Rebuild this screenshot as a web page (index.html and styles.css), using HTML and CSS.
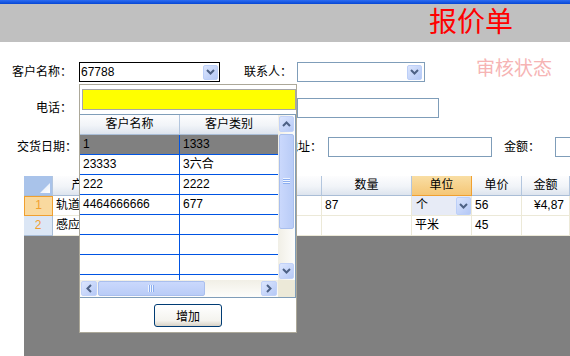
FILE: index.html
```html
<!DOCTYPE html>
<html lang="zh-CN">
<head>
    <meta charset="UTF-8">
    <title>报价单</title>
    <link rel="stylesheet" href="styles.css">
</head>
<body>
    <div class="titlebar"></div>
    <div class="banner"><span class="title">报价单</span></div>

    <div class="form">
        <div class="row r1">
            <span class="lbl w72">客户名称：</span>
            <div class="field combo focus w141 ml7">
                <span class="val">67788</span>
                <span class="drop"><svg width="9" height="6" viewBox="0 0 9 6"><polyline points="1,1 4.5,4.5 8,1" fill="none" stroke="#4d6185" stroke-width="2"/></svg></span>
            </div>
            <span class="lbl w72">联系人：</span>
            <div class="field combo w128 ml5">
                <span class="val"></span>
                <span class="drop"><svg width="9" height="6" viewBox="0 0 9 6"><polyline points="1,1 4.5,4.5 8,1" fill="none" stroke="#4d6185" stroke-width="2"/></svg></span>
            </div>
            <span class="status">审核状态</span>
        </div>
        <div class="row r2">
            <span class="lbl w72">电话：</span>
            <div class="field w141 ml7"></div>
            <span class="lbl w72">手机：</span>
            <div class="field w142 ml5"></div>
        </div>
        <div class="row r3">
            <span class="lbl w77">交货日期：</span>
            <div class="field w120 ml2"></div>
            <span class="lbl w123">送货地址：</span>
            <div class="field w164 ml6"></div>
            <span class="lbl w48">金额：</span>
            <div class="field w80 ml15"></div>
        </div>
    </div>

    <div class="grid">
        <div class="h corner"><svg width="10" height="10" viewBox="0 0 10 10"><defs><linearGradient id="tri" x1="0" y1="0" x2="1" y2="1"><stop offset="0" stop-color="#dce7f7"/><stop offset="1" stop-color="#ffffff"/></linearGradient></defs><polygon points="10,0 10,10 0,10" fill="url(#tri)"/></svg></div>
        <div class="h">产品名称</div>
        <div class="h">规格</div>
        <div class="h">品牌</div>
        <div class="h">数量</div>
        <div class="h cur">单位</div>
        <div class="h">单价</div>
        <div class="h">金额</div>

        <div class="rh on">1</div>
        <div class="c">轨道灯</div>
        <div class="c"></div>
        <div class="c"></div>
        <div class="c">87</div>
        <div class="c edit">
            <span>个</span>
            <span class="drop cell-drop"><svg width="9" height="6" viewBox="0 0 9 6"><polyline points="1,1 4.5,4.5 8,1" fill="none" stroke="#4d6185" stroke-width="2"/></svg></span>
        </div>
        <div class="c">56</div>
        <div class="c money">¥4,87</div>

        <div class="rh">2</div>
        <div class="c">感应灯</div>
        <div class="c"></div>
        <div class="c"></div>
        <div class="c"></div>
        <div class="c">平米</div>
        <div class="c">45</div>
        <div class="c"></div>
    </div>

    <div class="popup">
        <div class="search"></div>
        <div class="pgrid">
            <div class="pview">
                <div class="prow phead"><div class="pc">客户名称</div><div class="pc">客户类别</div></div>
                <div class="prow sel"><div class="pc">1</div><div class="pc">1333</div></div>
                <div class="prow"><div class="pc">23333</div><div class="pc">3六合</div></div>
                <div class="prow"><div class="pc">222</div><div class="pc">2222</div></div>
                <div class="prow"><div class="pc">4464666666</div><div class="pc">677</div></div>
                <div class="prow"><div class="pc"></div><div class="pc"></div></div>
                <div class="prow"><div class="pc"></div><div class="pc"></div></div>
                <div class="prow"><div class="pc"></div><div class="pc"></div></div>
                <div class="prow"><div class="pc"></div><div class="pc"></div></div>
            </div>
            <div class="vscroll">
                <span class="sbtn"><svg width="9" height="6" viewBox="0 0 9 6"><polyline points="1,5 4.5,1.5 8,5" fill="none" stroke="#4d6185" stroke-width="2"/></svg></span>
                <span class="thumb vthumb"><svg width="7" height="7" viewBox="0 0 7 7"><g stroke-width="1"><line x1="0" y1="0.5" x2="7" y2="0.5" stroke="#eef4fe"/><line x1="0" y1="1.5" x2="7" y2="1.5" stroke="#8caef0"/><line x1="0" y1="3.5" x2="7" y2="3.5" stroke="#8caef0"/><line x1="0" y1="5.5" x2="7" y2="5.5" stroke="#8caef0"/><line x1="0" y1="2.5" x2="7" y2="2.5" stroke="#eef4fe"/><line x1="0" y1="4.5" x2="7" y2="4.5" stroke="#eef4fe"/></g></svg></span>
                <span class="spacer"></span>
                <span class="sbtn"><svg width="9" height="6" viewBox="0 0 9 6"><polyline points="1,1 4.5,4.5 8,1" fill="none" stroke="#4d6185" stroke-width="2"/></svg></span>
            </div>
            <div class="hscroll">
                <span class="sbtn hbtn"><svg width="6" height="9" viewBox="0 0 6 9"><polyline points="5,1 1.5,4.5 5,8" fill="none" stroke="#4d6185" stroke-width="2"/></svg></span>
                <span class="thumb hthumb"><svg width="7" height="7" viewBox="0 0 7 7"><g stroke-width="1"><line x1="0.5" y1="0" x2="0.5" y2="7" stroke="#eef4fe"/><line x1="1.5" y1="0" x2="1.5" y2="7" stroke="#8caef0"/><line x1="2.5" y1="0" x2="2.5" y2="7" stroke="#eef4fe"/><line x1="3.5" y1="0" x2="3.5" y2="7" stroke="#8caef0"/><line x1="4.5" y1="0" x2="4.5" y2="7" stroke="#eef4fe"/><line x1="5.5" y1="0" x2="5.5" y2="7" stroke="#8caef0"/></g></svg></span>
                <span class="spacer"></span>
                <span class="sbtn hbtn"><svg width="6" height="9" viewBox="0 0 6 9"><polyline points="1,1 4.5,4.5 1,8" fill="none" stroke="#4d6185" stroke-width="2"/></svg></span>
            </div>
            <div class="scorner"></div>
        </div>
        <div class="pfoot"><button class="btn">增加</button></div>
    </div>
</body>
</html>
```

FILE: styles.css
```css
* {
    box-sizing: border-box;
}
body {
    margin: 0;
    width: 570px;
    height: 356px;
    overflow: hidden;
    position: relative;
    background: #fff;
    color: #000;
    font-family: "Liberation Sans", "Noto Sans CJK SC", sans-serif;
    font-size: 12px;
}
.titlebar {
    height: 4px;
    background: linear-gradient(#2c6cf2, #0646d4);
}
.banner {
    height: 38px;
    background: #c0c0c0;
    display: flex;
    justify-content: flex-end;
    padding-right: 57px;
}
.title {
    font-family: "Noto Sans CJK SC", sans-serif;
    font-size: 28px;
    line-height: 32px;
    color: #ff0000;
}

/* form rows */
.form {
    padding-top: 20px;
}
.row {
    display: flex;
    align-items: center;
    height: 20px;
    white-space: nowrap;
}
.r2 {
    margin-top: 16px;
}
.r3 {
    margin-top: 19px;
}
.lbl {
    flex-shrink: 0;
    text-align: right;
    line-height: 20px;
}
.field {
    flex-shrink: 0;
    height: 20px;
    border: 1px solid #7f9db9;
    background: #fff;
}
.combo {
    display: flex;
    align-items: center;
    justify-content: space-between;
    padding: 0 2px 0 1px;
}
.combo.focus {
    border-color: #000;
    padding-right: 1px;
}
.val {
    line-height: 18px;
}
.drop {
    width: 15px;
    height: 15px;
    border: 1px solid #bccff8;
    border-radius: 2px;
    background: linear-gradient(135deg, #dbe5fd, #b4c8f6);
    display: flex;
    align-items: center;
    justify-content: center;
}
.status {
    align-self: flex-start;
    margin-top: -5px;
    margin-left: 51px;
    font-family: "Noto Sans CJK SC", sans-serif;
    font-size: 19px;
    line-height: 20px;
    color: #f6b4b4;
}
.w48 { width: 48px; }
.w72 { width: 72px; }
.w77 { width: 77px; }
.w80 { width: 80px; }
.w120 { width: 120px; }
.w123 { width: 123px; }
.w128 { width: 128px; }
.w141 { width: 141px; }
.w142 { width: 142px; }
.w164 { width: 164px; }
.ml2 { margin-left: 2px; }
.ml5 { margin-left: 5px; }
.ml6 { margin-left: 6px; }
.ml7 { margin-left: 7px; }
.ml15 { margin-left: 15px; }

/* main grid */
.grid {
    margin: 19px 0 0 24px;
    height: 180px;
    background: #808080;
    display: grid;
    grid-template-columns: 29px 86px 91px 92px 90px 60px 50px 48px;
    grid-auto-rows: 20px;
    align-content: start;
}
.h {
    background: linear-gradient(#fdfdfe, #f1f4f8 55%, #dde4ee);
    border-right: 1px solid #b3c6de;
    border-bottom: 1px solid #a9bdd6;
    text-align: center;
    line-height: 19px;
    white-space: nowrap;
    overflow: hidden;
}
.h.corner {
    background: #a9c3ea;
    display: flex;
    align-items: flex-end;
    justify-content: flex-end;
    padding: 0 2px 2px 0;
}
.h.cur {
    background: linear-gradient(#f9dea4, #f5c676);
    border-right-color: #f0a030;
    border-bottom-color: #f0a030;
}
.rh {
    background: #dbe6f5;
    border-right: 1px solid #a9bdd6;
    border-bottom: 1px solid #a9bdd6;
    color: #f0a030;
    text-align: center;
    line-height: 19px;
}
.rh.on {
    background: #f9d99f;
    border: 1px solid #f0a030;
    line-height: 17px;
}
.c {
    background: #fff;
    border-right: 1px solid #ece9d8;
    border-bottom: 1px solid #ece9d8;
    padding-left: 3px;
    line-height: 19px;
    white-space: nowrap;
    overflow: hidden;
}
.c.edit {
    background: #e7ebf6;
    display: flex;
    justify-content: space-between;
    align-items: flex-start;
    padding-left: 4px;
}
.cell-drop {
    height: 18px;
    margin-top: 1px;
}
.c.money {
    padding-left: 12px;
}

/* customer lookup popup */
.popup {
    position: absolute;
    left: 79px;
    top: 84px;
    width: 218px;
    height: 249px;
    border: 1px solid #aca899;
    background: #fff;
}
.search {
    margin: 4px 0 0 2px;
    width: 214px;
    height: 21px;
    border: 1px solid #a7a7a7;
    background: #ffff00;
}
.pgrid {
    margin-top: 4px;
    width: 216px;
    display: grid;
    grid-template-columns: 198px 17px;
    grid-template-rows: 165px 17px;
    border: 1px solid #7f9db9;
    border-left: none;
}
.pview {
    overflow: hidden;
}
.prow {
    display: flex;
    height: 20px;
    border-bottom: 1px solid #0054e3;
}
.pc {
    padding-left: 3px;
    line-height: 19px;
    white-space: nowrap;
    overflow: hidden;
}
.pc:first-child {
    width: 100px;
    border-right: 1px solid #0054e3;
}
.pc:last-child {
    width: 98px;
}
.phead {
    background: linear-gradient(#fdfdfe, #f1f4f8 55%, #dde4ee);
    border-bottom-color: #a9bdd6;
}
.phead .pc {
    text-align: center;
    padding-left: 0;
    border-right-color: #b3c6de;
}
.prow.sel {
    background: #808080;
}
.vscroll,
.hscroll {
    display: flex;
    padding: 1px;
    background: linear-gradient(to right, #f1efe6, #fdfdfb);
}
.vscroll {
    flex-direction: column;
}
.hscroll {
    background: linear-gradient(#f1efe6, #fdfdfb);
}
.spacer {
    flex: 1;
}
.sbtn {
    width: 15px;
    height: 16px;
    flex-shrink: 0;
    border: 1px solid #c2d2f8;
    border-radius: 2px;
    background: linear-gradient(135deg, #dce6fe, #b6c9f6);
    display: flex;
    align-items: center;
    justify-content: center;
}
.hbtn {
    width: 16px;
    height: 15px;
}
.thumb {
    border: 1px solid #a9bfee;
    border-radius: 2px;
    display: flex;
    align-items: center;
    justify-content: center;
}
.vthumb {
    width: 15px;
    height: 95px;
    margin-top: 2px;
    background: linear-gradient(to right, #cad8fc, #b9ccf7);
}
.hthumb {
    width: 107px;
    height: 15px;
    margin-left: 1px;
    background: linear-gradient(#cad8fc, #b9ccf7);
}
.scorner {
    background: #ece9d8;
}
.pfoot {
    display: flex;
    justify-content: center;
    padding-top: 6px;
}
.btn {
    width: 68px;
    height: 23px;
    padding: 0;
    border: 1px solid #003c74;
    border-radius: 3px;
    background: linear-gradient(#ffffff, #f4f3ee 75%, #d8d2c6);
    font-family: "Liberation Sans", "Noto Sans CJK SC", sans-serif;
    font-size: 12px;
    color: #000;
}
```
